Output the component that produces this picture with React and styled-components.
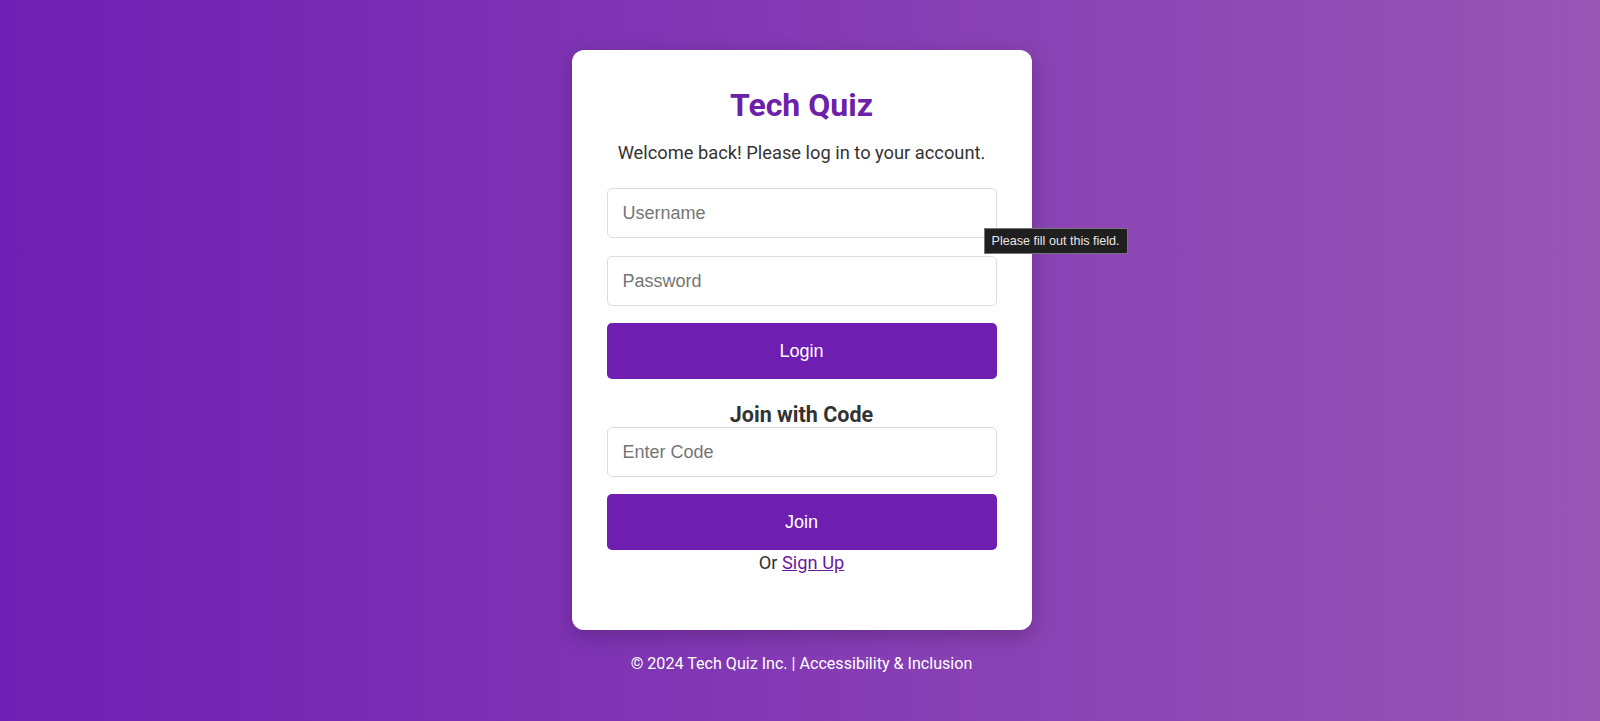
import React, { useState } from "react";
import styled, { createGlobalStyle } from "styled-components";

// styles

const GlobalStyle = createGlobalStyle`
  html, body {
    margin: 0;
    padding: 0;
  }
  body {
    font-family: Roboto, "Liberation Sans", Arial, sans-serif;
    background: linear-gradient(90deg, #6f1fb3 0%, #9856b5 100%);
    min-height: 100vh;
  }
`;

const Page = styled.div`
  min-height: 721px;
  display: flex;
  flex-direction: column;
  align-items: center;
  padding: 50px 0 0 3px;
  box-sizing: border-box;
`;

const Card = styled.div`
  width: 460px;
  box-sizing: border-box;
  padding: 36px 35px 56px;
  background: #fff;
  border-radius: 12px;
  box-shadow: 0 6px 20px rgba(0, 0, 0, 0.22);
  display: flex;
  flex-direction: column;
  text-align: center;
`;

const Title = styled.h1`
  margin: 0;
  font-size: 32px;
  line-height: 38px;
  font-weight: 700;
  color: #6c21a9;
`;

const Subtitle = styled.p`
  margin: 18px 0 24px;
  font-size: 18.3px;
  line-height: 22px;
  color: #333;
`;

const Field = styled.div`
  position: relative;
  margin-bottom: ${(p) => p.$gap || 0}px;
`;

const Input = styled.input`
  display: block;
  width: 100%;
  height: 50px;
  box-sizing: border-box;
  padding: 0 15px;
  border: 1px solid #ddd;
  border-radius: 5px;
  font-family: "Liberation Sans", Arial, sans-serif;
  font-size: 18px;
  color: #333;
  outline: none;
  &::placeholder {
    color: #757575;
  }
`;

const Button = styled.button`
  display: block;
  width: 100%;
  height: 56px;
  margin-top: 17px;
  border: none;
  border-radius: 5px;
  background: #6e1fb1;
  color: #fff;
  font-family: "Liberation Sans", Arial, sans-serif;
  font-size: 18px;
  cursor: pointer;
`;

const SubHeading = styled.h2`
  margin: 24px 0 0;
  font-size: 21.5px;
  line-height: 24px;
  font-weight: 700;
  color: #333;
`;

const Footnote = styled.p`
  margin: 2px 0 0;
  font-size: 18.3px;
  line-height: 22px;
  color: #333;
`;

const Link = styled.a`
  color: #6a1b9a;
  text-decoration: underline;
`;

const Tooltip = styled.div`
  position: absolute;
  left: 377px;
  top: 40px;
  width: 144px;
  height: 26px;
  box-sizing: border-box;
  padding: 0 7px;
  display: flex;
  align-items: center;
  background: #1f1f1f;
  border: 1px solid #767676;
  color: #e6e6e6;
  font-family: "Liberation Sans", Arial, sans-serif;
  font-size: 12.6px;
  white-space: nowrap;
  z-index: 2;
`;

const Footer = styled.footer`
  margin-top: 24px;
  font-size: 16.1px;
  line-height: 19px;
  color: #fff;
`;

function App() {
  const [username, setUsername] = useState("");
  const [password, setPassword] = useState("");
  const [code, setCode] = useState("");

  return (
    <Page>
      <GlobalStyle />
      <Card>
        <Title>Tech Quiz</Title>
        <Subtitle>Welcome back! Please log in to your account.</Subtitle>
        <Field $gap={18}>
          <Input
            type="text"
            placeholder="Username"
            value={username}
            onChange={(e) => setUsername(e.target.value)}
          />
          <Tooltip>Please fill out this field.</Tooltip>
        </Field>
        <Field>
          <Input
            type="password"
            placeholder="Password"
            value={password}
            onChange={(e) => setPassword(e.target.value)}
          />
        </Field>
        <Button type="submit">Login</Button>

        <SubHeading>Join with Code</SubHeading>
        <Field>
          <Input
            type="text"
            placeholder="Enter Code"
            value={code}
            onChange={(e) => setCode(e.target.value)}
          />
        </Field>
        <Button type="button">Join</Button>
        <Footnote>
          Or <Link href="#">Sign Up</Link>
        </Footnote>
      </Card>
      <Footer>© 2024 Tech Quiz Inc. | Accessibility &amp; Inclusion</Footer>
    </Page>
  );
}

export default App;
